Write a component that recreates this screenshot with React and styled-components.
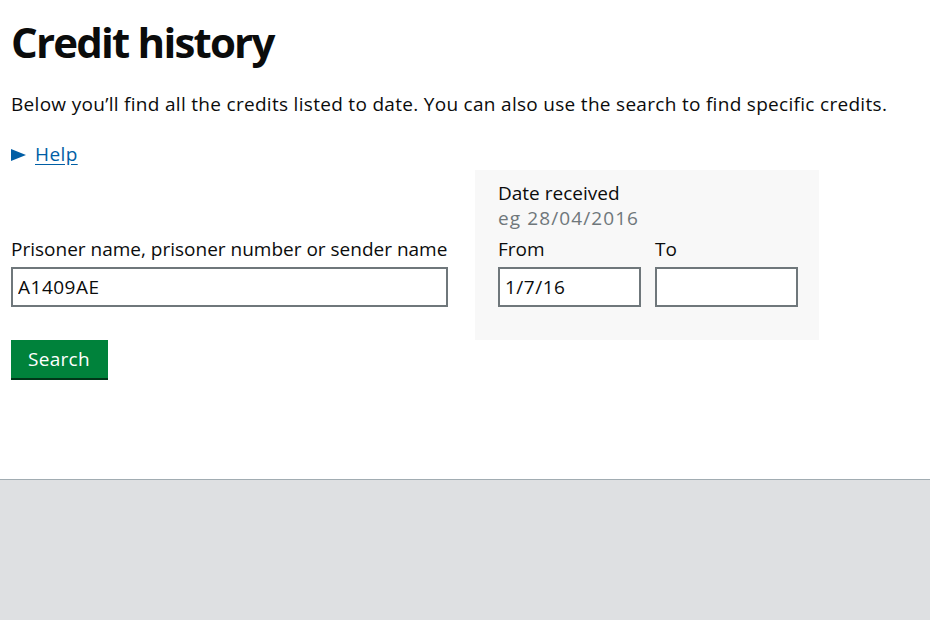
import styled, { createGlobalStyle } from "styled-components";

const font = `"Open Sans", "Liberation Sans", Arial, sans-serif`;

const GlobalStyle = createGlobalStyle`
  html, body {
    margin: 0;
    padding: 0;
    background: #fff;
  }
  body {
    font-family: ${font};
    color: #0b0c0c;
  }
`;

const Page = styled.div`
  min-height: 620px;
  display: flex;
  flex-direction: column;
`;

const Main = styled.main`
  height: 479px;
  box-sizing: border-box;
  padding: 17px 11px 0;
`;

const Heading = styled.h1`
  margin: 0;
  font-size: 42px;
  line-height: 50px;
  font-weight: 700;
  letter-spacing: -1.8px;
`;

const Lead = styled.p`
  margin: 25px 0 0;
  font-size: 19px;
  line-height: 25px;
  letter-spacing: 0.3px;
`;

const Details = styled.div`
  margin-top: 25px;
  display: flex;
  align-items: center;
  gap: 9px;
  font-size: 19px;
  line-height: 25px;
`;

const Arrow = styled.span`
  width: 0;
  height: 0;
  border-style: solid;
  border-width: 6px 0 6px 15px;
  border-color: transparent transparent transparent #005ea5;
`;

const HelpLink = styled.a`
  color: #005ea5;
  text-decoration: underline;
  text-underline-offset: 3px;
  letter-spacing: 0.4px;
`;

const Form = styled.form`
  margin-top: 3px;
`;

const Row = styled.div`
  display: flex;
  align-items: flex-end;
  gap: 27px;
`;

const Column = styled.div`
  width: 437px;
  padding-bottom: 33px;
`;

const Panel = styled.div`
  width: 344px;
  height: 170px;
  box-sizing: border-box;
  background: #f8f8f8;
  padding: 11px 20px 0 23px;
`;

const Label = styled.label`
  display: block;
  font-size: 19px;
  line-height: 25px;
`;

const Hint = styled.span`
  display: block;
  font-size: 19px;
  line-height: 25px;
  color: #6f777b;
  letter-spacing: 1.1px;
`;

const Fields = styled.div`
  display: flex;
  gap: 14px;
  margin-top: 6px;
`;

const Field = styled.div`
  width: 143px;
  flex-shrink: 0;
`;

const Input = styled.input`
  display: block;
  box-sizing: border-box;
  width: 100%;
  height: 40px;
  margin-top: 5px;
  padding: 4px 5px;
  border: 2px solid #6f777b;
  background: #fff;
  font-family: ${font};
  font-size: 19px;
  letter-spacing: 0.5px;
  color: #0b0c0c;
  outline: none;
`;

const Button = styled.button`
  display: block;
  padding: 0 18px 0 17px;
  height: 38px;
  border: 0;
  background: #00823b;
  box-shadow: 0 2px 0 #003618;
  color: #fff;
  font-family: ${font};
  font-size: 19px;
  letter-spacing: 0.3px;
  cursor: pointer;
`;

const Footer = styled.footer`
  flex: 1;
  background: #dee0e2;
  border-top: 1px solid #a1acb2;
`;

export default function App() {
  return (
    <Page>
      <GlobalStyle />
      <Main>
        <Heading>Credit history</Heading>
        <Lead>
          Below you’ll find all the credits listed to date. You can also use the search to find specific credits.
        </Lead>
        <Details>
          <Arrow />
          <HelpLink href="#">Help</HelpLink>
        </Details>
        <Form onSubmit={(e) => e.preventDefault()}>
          <Row>
            <Column>
              <Label htmlFor="search">Prisoner name, prisoner number or sender name</Label>
              <Input id="search" defaultValue="A1409AE" />
            </Column>
            <Panel>
              <Label>Date received</Label>
              <Hint>eg 28/04/2016</Hint>
              <Fields>
                <Field>
                  <Label htmlFor="from">From</Label>
                  <Input id="from" defaultValue="1/7/16" />
                </Field>
                <Field>
                  <Label htmlFor="to">To</Label>
                  <Input id="to" />
                </Field>
              </Fields>
            </Panel>
          </Row>
          <Button type="submit">Search</Button>
        </Form>
      </Main>
      <Footer />
    </Page>
  );
}
